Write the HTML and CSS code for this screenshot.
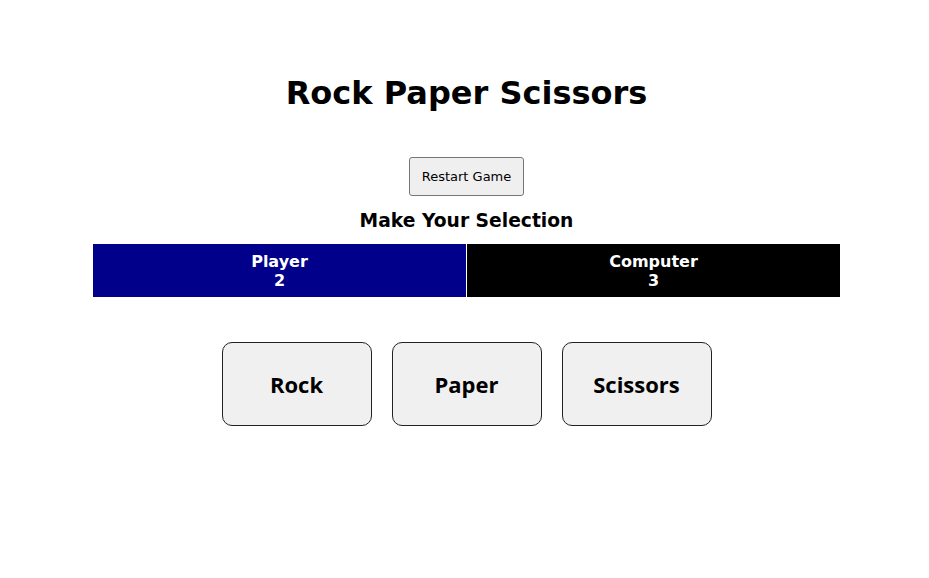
FILE: index.html
```html
<!DOCTYPE html>
<html>
<head>
<meta charset="utf-8">
<link rel="stylesheet" href="styles.css">
</head>
<body>
<div class="page">
  <h1 class="title">Rock Paper Scissors</h1>
  <button class="restart">Restart Game</button>
  <h3 class="prompt">Make Your Selection</h3>
  <div class="scores">
    <div class="score player">Player<br>2</div>
    <div class="score computer">Computer<br>3</div>
  </div>
  <div class="choices">
    <button class="choice">Rock</button>
    <button class="choice">Paper</button>
    <button class="choice">Scissors</button>
  </div>
</div>
</body>
</html>
```
FILE: styles.css
```css
html, body {
  margin: 0;
  padding: 0;
  background: #fff;
}
body {
  font-family: Verdana, "DejaVu Sans", sans-serif;
  color: #000;
}
.page {
  display: flex;
  flex-direction: column;
  align-items: center;
  padding-top: 74px;
  padding-left: 4px;
}
.title {
  font-size: 32px;
  font-weight: bold;
  margin: 0;
  line-height: 38px;
}
.restart {
  margin-top: 45px;
  width: 115px;
  height: 39px;
  font-family: Verdana, "DejaVu Sans", sans-serif;
  font-size: 13px;
  background: #efefef;
  border: 1px solid #767676;
  border-radius: 3px;
  color: #000;
  padding: 0;
}
.prompt {
  margin: 13px 0 0;
  font-size: 18.7px;
  line-height: 24px;
  font-weight: bold;
}
.scores {
  margin-top: 11px;
  display: flex;
  gap: 1px;
  width: 747px;
  height: 53px;
}
.score {
  flex: 1;
  color: #fff;
  font-weight: bold;
  font-size: 16px;
  line-height: 19px;
  text-align: center;
  padding-top: 8px;
  box-sizing: border-box;
}
.player { background: #00008b; }
.computer { background: #000; }
.choices {
  margin-top: 45px;
  display: flex;
  gap: 20px;
}
.choice {
  width: 150px;
  height: 84px;
  background: #f0f0f0;
  border: 1px solid #222;
  border-radius: 10px;
  font-family: "Comic Sans MS", "Open Sans", sans-serif;
  font-weight: 700;
  font-size: 22px;
  color: #000;
  padding: 0;
}
```
